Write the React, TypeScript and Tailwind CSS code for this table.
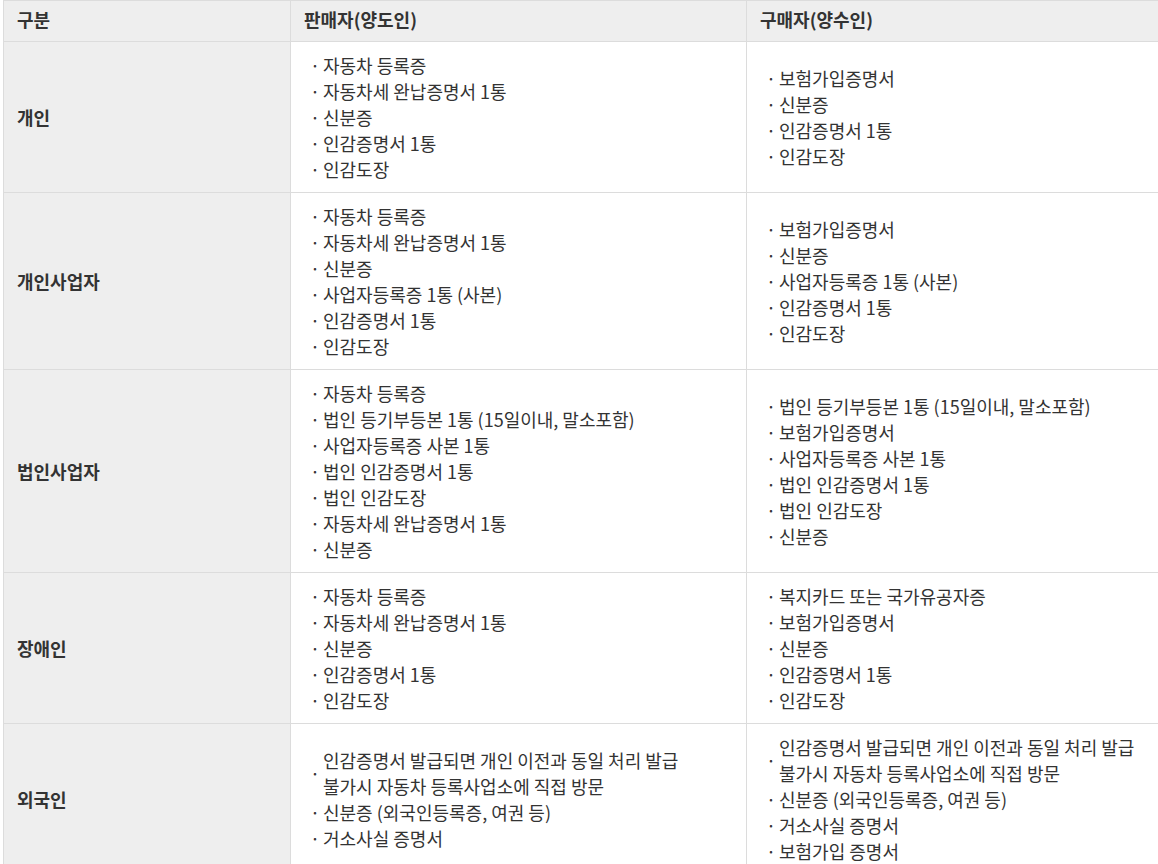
import React from "react";

type Row = { label: string; seller: string[]; buyer: string[] };

const rows: Row[] = [
  {
    label: "개인",
    seller: ["자동차 등록증", "자동차세 완납증명서 1통", "신분증", "인감증명서 1통", "인감도장"],
    buyer: ["보험가입증명서", "신분증", "인감증명서 1통", "인감도장"],
  },
  {
    label: "개인사업자",
    seller: ["자동차 등록증", "자동차세 완납증명서 1통", "신분증", "사업자등록증 1통 (사본)", "인감증명서 1통", "인감도장"],
    buyer: ["보험가입증명서", "신분증", "사업자등록증 1통 (사본)", "인감증명서 1통", "인감도장"],
  },
  {
    label: "법인사업자",
    seller: [
      "자동차 등록증",
      "법인 등기부등본 1통 (15일이내, 말소포함)",
      "사업자등록증 사본 1통",
      "법인 인감증명서 1통",
      "법인 인감도장",
      "자동차세 완납증명서 1통",
      "신분증",
    ],
    buyer: [
      "법인 등기부등본 1통 (15일이내, 말소포함)",
      "보험가입증명서",
      "사업자등록증 사본 1통",
      "법인 인감증명서 1통",
      "법인 인감도장",
      "신분증",
    ],
  },
  {
    label: "장애인",
    seller: ["자동차 등록증", "자동차세 완납증명서 1통", "신분증", "인감증명서 1통", "인감도장"],
    buyer: ["복지카드 또는 국가유공자증", "보험가입증명서", "신분증", "인감증명서 1통", "인감도장"],
  },
  {
    label: "외국인",
    seller: [
      "인감증명서 발급되면 개인 이전과 동일 처리 발급\n불가시 자동차 등록사업소에 직접 방문",
      "신분증 (외국인등록증, 여권 등)",
      "거소사실 증명서",
    ],
    buyer: [
      "인감증명서 발급되면 개인 이전과 동일 처리 발급\n불가시 자동차 등록사업소에 직접 방문",
      "신분증 (외국인등록증, 여권 등)",
      "거소사실 증명서",
      "보험가입 증명서",
    ],
  },
];

function Items({ items }: { items: string[] }) {
  return (
    <ul className="flex flex-col">
      {items.map((t, i) => (
        <li key={i} className="flex items-center">
          <span className="w-[13px] shrink-0 leading-[26px]">·</span>
          <span className="whitespace-pre-line">{t}</span>
        </li>
      ))}
    </ul>
  );
}

export default function App() {
  return (
    <div
      className="w-[1158px] h-[864px] overflow-hidden bg-white text-[#333] text-[18px] leading-[26px]"
      style={{ fontFamily: '"Noto Sans CJK KR", "Noto Sans", sans-serif' }}
    >
      <div className="pl-[3px]">
        <table className="border-collapse w-[1165px] table-fixed">
          <colgroup>
            <col className="w-[287px]" />
            <col className="w-[456px]" />
            <col />
          </colgroup>
          <thead>
            <tr className="bg-[#eeeeee]">
              <th className="border border-[#dcdcdc] px-[13px] pt-[5px] pb-[9px] text-left font-bold">구분</th>
              <th className="border border-[#dcdcdc] px-[13px] pt-[5px] pb-[9px] text-left font-bold">판매자(양도인)</th>
              <th className="border border-[#dcdcdc] px-[13px] pt-[5px] pb-[9px] text-left font-bold">구매자(양수인)</th>
            </tr>
          </thead>
          <tbody>
            {rows.map((r) => (
              <tr key={r.label}>
                <td className="border border-[#dcdcdc] bg-[#eeeeee] px-[13px] align-middle font-bold">{r.label}</td>
                <td className="border border-[#dcdcdc] pl-[19px] pr-[13px] py-[10px] align-middle">
                  <Items items={r.seller} />
                </td>
                <td className="border border-[#dcdcdc] pl-[19px] pr-[13px] py-[10px] align-middle">
                  <Items items={r.buyer} />
                </td>
              </tr>
            ))}
          </tbody>
        </table>
      </div>
    </div>
  );
}
